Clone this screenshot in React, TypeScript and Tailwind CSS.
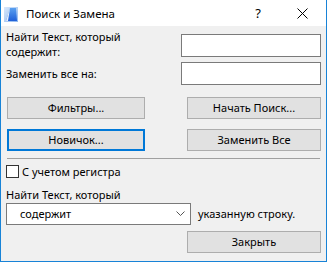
import React from "react";

const font = { fontFamily: '"Noto Sans", "Open Sans", sans-serif' };

function Btn({ label, focused, className }: { label: string; focused?: boolean; className?: string }) {
  return (
    <div
      className={
        "h-[22px] flex items-center justify-center bg-[#e1e1e1] text-[11px] text-black " +
        (focused ? "border-2 border-[#0078d7] " : "border border-[#adadad] ") +
        (className || "")
      }
    >
      {label}
    </div>
  );
}

export default function App() {
  return (
    <div className="w-[327px] h-[262px] flex flex-col bg-[#f0f0f0] border-x border-b border-[#1883d7] text-black" style={font}>
      {/* Title bar */}
      <div className="h-[26px] bg-white flex items-center shrink-0">
        <svg width="14" height="15" viewBox="0 0 14 15" className="ml-[3px] mt-[2px]">
          <defs>
            <linearGradient id="g" x1="0" y1="0" x2="1" y2="1">
              <stop offset="0" stopColor="#d8e8fb" />
              <stop offset="1" stopColor="#8fb7ee" />
            </linearGradient>
            <linearGradient id="t" x1="0" y1="0" x2="0" y2="1">
              <stop offset="0" stopColor="#5aa0f0" />
              <stop offset="1" stopColor="#1f5fd8" />
            </linearGradient>
          </defs>
          <rect x="0" y="0" width="14" height="15" fill="url(#g)" />
          <path d="M6 1 L12 1 L13 14 L2 14 Z" fill="url(#t)" />
          <path d="M6 1 L4 14 L2 14 Z" fill="#ffffff" opacity="0.9" />
        </svg>
        <span className="ml-[8px] text-[11.5px] leading-none mt-[1px]">Поиск и Замена</span>
        <div className="flex-1" />
        <span className="text-[13px] leading-none mr-[36px] mt-[1px]">?</span>
        <svg width="11" height="11" viewBox="0 0 11 11" className="mr-[18px]">
          <path d="M0.5 0.5 L10.5 10.5 M10.5 0.5 L0.5 10.5" stroke="#000" strokeWidth="1" />
        </svg>
      </div>

      {/* Content */}
      <div className="flex flex-col pl-[5px] pr-[5px] pt-[3px] text-[11px]">
        <div className="flex items-start h-[30px]">
          <div className="w-[175px] leading-[15px]">
            Найти Текст, который
            <br />
            содержит:
          </div>
          <div className="mt-[5px] w-[140px] h-[23px] bg-white border border-[#7a7a7a]" />
        </div>
        <div className="flex items-center mt-[3px] h-[23px]">
          <div className="w-[175px] leading-[15px]">Заменить все на:</div>
          <div className="w-[140px] h-[23px] bg-white border border-[#7a7a7a]" />
        </div>

        <div className="flex justify-between mt-[12px] pl-[1px]">
          <Btn label="Фильтры..." className="w-[138px]" />
          <Btn label="Начать Поиск..." className="w-[134px]" />
        </div>
        <div className="flex justify-between mt-[10px] pl-[1px]">
          <Btn label="Новичок..." focused className="w-[138px]" />
          <Btn label="Заменить Все" className="w-[134px]" />
        </div>

        <div className="mt-[7px] ml-[1px] mr-[1px] h-px bg-[#a0a0a0]" />

        <div className="flex items-center mt-[6px] h-[13px]">
          <div className="w-[13px] h-[13px] bg-white border border-[#333333]" />
          <span className="ml-[3px] leading-[13px]">С учетом регистра</span>
        </div>

        <div className="mt-[9px] leading-[15px]">Найти Текст, который</div>

        <div className="flex items-center mt-[1px]">
          <div className="w-[185px] h-[22px] bg-white border border-[#7a7a7a] flex items-center pl-[13px] pr-[5px]">
            <span className="flex-1">содержит</span>
            <svg width="9" height="6" viewBox="0 0 9 6">
              <path d="M0.5 0.5 L4.5 4.5 L8.5 0.5" stroke="#555" strokeWidth="1" fill="none" />
            </svg>
          </div>
          <span className="ml-[7px]">указанную строку.</span>
        </div>

        <div className="flex justify-end mt-[6px]">
          <Btn label="Закрыть" className="w-[134px]" />
        </div>
      </div>
    </div>
  );
}
